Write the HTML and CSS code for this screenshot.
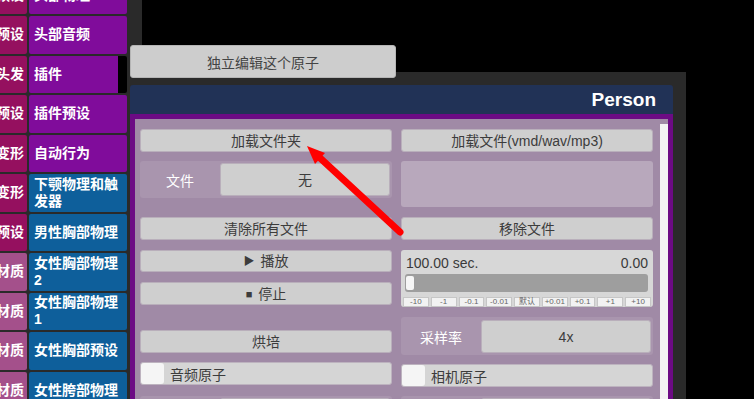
FILE: index.html
```html
<!DOCTYPE html>
<html>
	<head>
		<meta charset="UTF-8">
		<title>Person</title>
		<link rel="stylesheet" href="styles.css">
	</head>
	<body>
		<div id="app">
			<div id="side">
				<ul id="tabs">
					<li><span class="cat">预设</span><span class="item">头部物理</span></li>
					<li><span class="cat">预设</span><span class="item">头部音频</span></li>
					<li><span class="cat">头发</span><span class="item narrow">插件</span></li>
					<li><span class="cat">预设</span><span class="item">插件预设</span></li>
					<li><span class="cat">变形</span><span class="item">自动行为</span></li>
					<li><span class="cat">变形</span><span class="item blue">下颚物理和触发器</span></li>
					<li><span class="cat">预设</span><span class="item blue">男性胸部物理</span></li>
					<li><span class="cat light">材质</span><span class="item blue">女性胸部物理 2</span></li>
					<li><span class="cat light">材质</span><span class="item blue">女性胸部物理 1</span></li>
					<li><span class="cat light">材质</span><span class="item blue">女性胸部预设</span></li>
					<li><span class="cat light">材质</span><span class="item blue">女性胯部物理</span></li>
				</ul>
			</div>
			<div id="main">
				<div class="top"></div>
				<div class="window">
					<div class="title">Person</div>
					<div class="pane">
						<div class="content">
							<div class="grid">
								<div class="btn">加载文件夹</div>
								<div class="btn">加载文件(vmd/wav/mp3)</div>

								<div class="field"><span class="label">文件</span><span class="btn">无</span></div>
								<div class="box"></div>

								<div class="btn">清除所有文件</div>
								<div class="btn">移除文件</div>

								<div class="stack">
									<div class="btn play"><span class="sym">&#9654;</span>播放</div>
									<div class="btn"><span class="sym">&#9632;</span>停止</div>
								</div>
								<div class="slider">
									<div class="slider-head"><span>100.00 sec.</span><span>0.00</span></div>
									<div class="track"><span class="handle"></span></div>
									<div class="steps">
										<span>-10</span><span>-1</span><span>-0.1</span><span>-0.01</span><span>默认</span><span>+0.01</span><span>+0.1</span><span>+1</span><span>+10</span>
									</div>
								</div>

								<div class="btn bake">烘培</div>
								<div class="field rate"><span class="label">采样率</span><span class="btn">4x</span></div>

								<div class="check"><span class="tick"></span>音频原子</div>
								<div class="check cam"><span class="tick"></span>相机原子</div>

								<div class="field"><span class="label"></span><span class="btn"></span></div>
								<div class="field"><span class="label"></span><span class="btn"></span></div>
							</div>
						</div>
						<div class="scroll"></div>
					</div>
				</div>
			</div>
			<div class="popup">独立编辑这个原子</div>
			<svg class="arrow" width="754" height="399" viewBox="0 0 754 399">
				<line x1="400" y1="232" x2="319" y2="157" stroke="#ff0000" stroke-width="7" stroke-linecap="round"/>
				<polygon points="307,146 325,153 315,164" fill="#ff0000"/>
			</svg>
		</div>
	</body>
</html>
```

FILE: styles.css
```css
* {
	margin: 0;
	padding: 0;
	box-sizing: border-box;
}
html, body {
	width: 754px;
	height: 399px;
	overflow: hidden;
	background-color: #000;
}
body {
	font-family: "Liberation Sans", "Noto Sans CJK SC", sans-serif;
	font-size: 14px;
	color: #3c3c3c;
}
#app {
	display: flex;
	height: 399px;
	position: relative;
}
#side {
	width: 127px;
	flex-shrink: 0;
	background-color: #2a2a2a;
	overflow: hidden;
}
#tabs {
	list-style: none;
	margin-top: -23.5px;
	display: flex;
	flex-direction: column;
	gap: 2px;
}
#tabs li {
	display: grid;
	grid-template-columns: 27px 98px;
	column-gap: 2px;
	height: 37.5px;
	flex-shrink: 0;
}
#tabs span {
	color: white;
	font-weight: bold;
	font-size: 14px;
	line-height: 17px;
	display: flex;
	align-items: center;
}
.cat {
	justify-content: flex-end;
	padding-right: 3px;
	overflow: hidden;
	white-space: nowrap;
	background-color: #95105f;
	border-radius: 0 2px 2px 0;
}
.cat.light {
	background-color: #a4508b;
}
.item {
	padding-left: 5px;
	background-color: #800c9b;
	border-radius: 2px;
}
.item.blue {
	background-color: #0e5f9b;
}
.item.narrow {
	background: linear-gradient(to right, #800c9b 89px, #000 89px);
}
#main {
	height: 399px;
	display: flex;
	flex-direction: column;
	overflow: hidden;
}
.top {
	height: 72px;
	flex-shrink: 0;
	width: 559px;
	background: linear-gradient(to right, #2a2a2a 15px, #000 15px);
}
.window {
	flex: 1;
	min-height: 0;
	width: 559px;
	background-color: #2a2a2a;
	padding: 13px 13px 0 3px;
	display: flex;
	flex-direction: column;
}
.title {
	height: 29px;
	flex-shrink: 0;
	background-color: #213256;
	border-radius: 3px 3px 0 0;
	text-align: right;
	padding-right: 17px;
	font-size: 19px;
	font-weight: bold;
	line-height: 29px;
	color: white;
}
.pane {
	flex: 1;
	min-height: 0;
	display: flex;
	border: 5px solid #6c0b84;
	border-bottom: none;
	background-color: #a08aa6;
	overflow: hidden;
}
.content {
	flex: 1;
	padding: 10px 0 0 5px;
	overflow: hidden;
}
.scroll {
	width: 8px;
	margin-top: 5px;
	background-color: #f3f3f3;
}
.grid {
	display: grid;
	grid-template-columns: 252px 252px;
	column-gap: 9px;
	grid-template-rows: 23px 47px 24px 58px 38px 23px 40px;
	row-gap: 9px;
	align-items: start;
}
.btn {
	height: 23px;
	background-color: #cfcfcf;
	border: 1px solid #b9afbb;
	border-radius: 3px;
	display: flex;
	align-items: center;
	justify-content: center;
	line-height: 18px;
	color: #3c3c3c;
}
.btn .sym {
	font-size: 11px;
	margin-right: 6px;
}
.play {
	height: 22px;
}
.stack {
	display: flex;
	flex-direction: column;
	gap: 10px;
}
.bake {
	align-self: end;
	margin-bottom: 2px;
}
.field {
	height: 37px;
	display: flex;
	background-color: #a995ae;
	border-radius: 3px;
	padding: 2px 2px 2px 0;
}
.field .label {
	width: 80px;
	display: flex;
	align-items: center;
	justify-content: center;
	color: white;
}
.field .btn {
	flex: 1;
	height: 33px;
}
.field.rate {
	height: 38px;
	padding-top: 3px;
}
.box {
	height: 46px;
	background-color: #b8a8bc;
	border-radius: 3px;
}
.slider {
	height: 57px;
	background-color: #d7d7d7;
	border-radius: 3px;
	padding: 4px 5px 0 4px;
}
.slider-head {
	display: flex;
	justify-content: space-between;
	line-height: 18px;
	padding-left: 1px;
	color: #3a3a3a;
}
.track {
	height: 18px;
	margin-top: 2px;
	background-color: #9e9e9e;
	border-radius: 3px;
	padding: 2px 1px;
}
.handle {
	display: block;
	width: 8px;
	height: 14px;
	background-color: #f6f6f6;
	border-radius: 2px;
}
.steps {
	display: flex;
	gap: 2px;
	margin: 5px -3px 0 -2px;
}
.steps span {
	flex: 1;
	height: 10px;
	background-color: #f2f2f2;
	border: 1px solid #c6c6c6;
	font-size: 8px;
	line-height: 8px;
	text-align: center;
	color: #666;
}
.check {
	height: 23px;
	margin-top: -2px;
	display: flex;
	align-items: center;
	background-color: #d5d5d5;
	border: 1px solid #bdb3bf;
	border-radius: 3px;
	color: #3c3c3c;
}
.check.cam {
	margin-top: 0;
}
.tick {
	width: 23px;
	height: 21px;
	margin-right: 6px;
	background-color: #f5f5f5;
	border-radius: 3px;
}
.popup {
	position: absolute;
	left: 130px;
	top: 45px;
	width: 266px;
	height: 33px;
	background-color: #cdcdcd;
	border: 1px solid #b5b5b5;
	border-radius: 3px;
	display: flex;
	align-items: center;
	justify-content: center;
	color: #444;
}
.arrow {
	position: absolute;
	left: 0;
	top: 0;
	pointer-events: none;
}
```
